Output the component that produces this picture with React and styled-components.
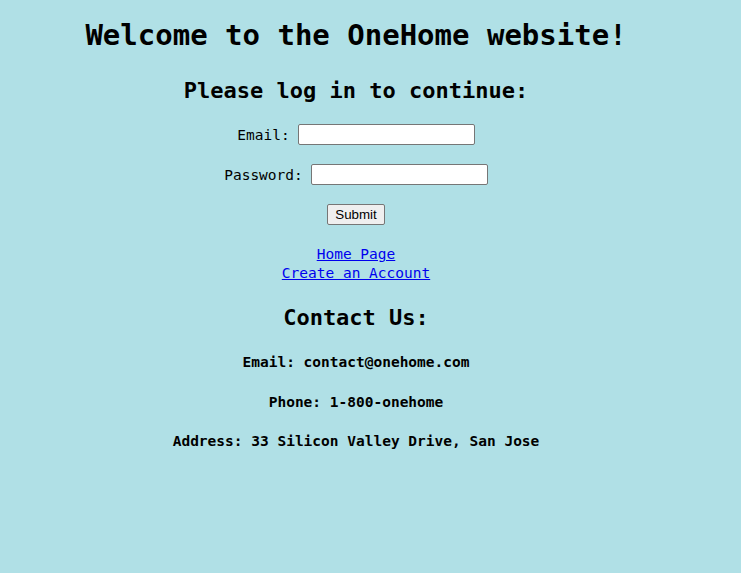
import React from 'react';
import styled, { createGlobalStyle } from 'styled-components';

const GlobalStyle = createGlobalStyle`
  html, body {
    margin: 0;
    padding: 0;
    background: #b0e0e6;
  }
  body {
    font-family: "DejaVu Sans Mono", "Liberation Mono", monospace;
    color: #000;
  }
`;

// whole page, centred on a 712px column like the original
const Page = styled.div`
  width: 712px;
  min-height: 573px;
  display: flex;
  flex-direction: column;
  align-items: center;
  text-align: center;
`;

const Title = styled.h1`
  font-size: 29px;
  font-weight: bold;
  margin: 18px 0 0;
  line-height: 34px;
`;

const SubTitle = styled.h2`
  font-size: 22px;
  font-weight: bold;
  margin: ${({ $top }) => $top} 0 0;
  line-height: 26px;
`;

const Form = styled.form`
  display: flex;
  flex-direction: column;
  align-items: center;
  gap: 19px;
  margin-top: 20px;
`;

const Row = styled.div`
  display: flex;
  align-items: center;
  gap: 8px;
  font-size: 14.5px;
`;

const Input = styled.input`
  box-sizing: border-box;
  width: 177px;
  height: 21px;
  border: 1px solid #767676;
  border-radius: 2px;
  background: #fff;
  padding: 1px 2px;
  font: 13.33px "Liberation Sans", Arial, sans-serif;
`;

const Button = styled.button`
  box-sizing: border-box;
  height: 21px;
  padding: 1px 7px;
  background: #efefef;
  border: 1px solid #767676;
  border-radius: 2px;
  font: 13.33px "Liberation Sans", Arial, sans-serif;
  color: #000;
`;

const Links = styled.div`
  display: flex;
  flex-direction: column;
  align-items: center;
  margin-top: 20px;
  font-size: 14.5px;
  line-height: 19px;
`;

const Link = styled.a`
  color: #0000ee;
  text-decoration: underline;
`;

const Info = styled.h4`
  font-size: 14.5px;
  font-weight: bold;
  margin: ${({ $top }) => $top} 0 0;
  line-height: 19px;
`;

export default function App() {
  return (
    <>
      <GlobalStyle />
      <Page>
        <Title>Welcome to the OneHome website!</Title>
        <SubTitle $top="26px">Please log in to continue:</SubTitle>
        <Form onSubmit={(e) => e.preventDefault()}>
          <Row>
            <label htmlFor="email">Email:</label>
            <Input id="email" type="text" />
          </Row>
          <Row>
            <label htmlFor="password">Password:</label>
            <Input id="password" type="password" />
          </Row>
          <Row>
            <Button type="submit">Submit</Button>
          </Row>
        </Form>
        <Links>
          <Link href="#">Home Page</Link>
          <Link href="#">Create an Account</Link>
        </Links>
        <SubTitle $top="22px">Contact Us:</SubTitle>
        <Info $top="22px">Email: contact@onehome.com</Info>
        <Info $top="21px">Phone: 1-800-onehome</Info>
        <Info $top="20px">Address: 33 Silicon Valley Drive, San Jose</Info>
      </Page>
    </>
  );
}
